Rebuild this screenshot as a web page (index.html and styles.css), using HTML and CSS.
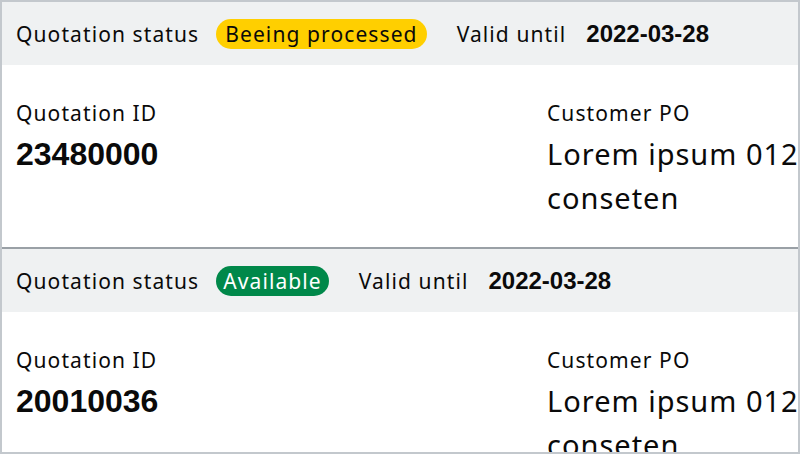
FILE: index.html
```html
<!DOCTYPE html>
<html>
<head>
<meta charset="utf-8">
<link rel="stylesheet" href="styles.css">
</head>
<body>
<div class="frame">
  <section class="card">
    <div class="card-head">
      <span class="label">Quotation status</span>
      <span class="badge badge-yellow">Beeing processed</span>
      <span class="label valid">Valid until</span>
      <span class="date">2022-03-28</span>
    </div>
    <div class="card-body">
      <div class="field">
        <div class="field-label">Quotation ID</div>
        <div class="field-id">23480000</div>
      </div>
      <div class="field">
        <div class="field-label">Customer PO</div>
        <div class="field-text">Lorem ipsum 0123456789<br>conseten</div>
      </div>
    </div>
  </section>
  <section class="card">
    <div class="card-head">
      <span class="label">Quotation status</span>
      <span class="badge badge-green">Available</span>
      <span class="label valid">Valid until</span>
      <span class="date">2022-03-28</span>
    </div>
    <div class="card-body">
      <div class="field">
        <div class="field-label">Quotation ID</div>
        <div class="field-id">20010036</div>
      </div>
      <div class="field">
        <div class="field-label">Customer PO</div>
        <div class="field-text">Lorem ipsum 0123456789<br>conseten</div>
      </div>
    </div>
  </section>
</div>
</body>
</html>
```

FILE: styles.css
```css
html, body {
  margin: 0;
  padding: 0;
  background: #ffffff;
}
.frame {
  box-sizing: border-box;
  width: 800px;
  height: 454px;
  border: 2px solid #c3c8cd;
  overflow: hidden;
  font-family: "Noto Sans", sans-serif;
  color: #0a0a0a;
}
.card {
  border-bottom: 2px solid #9aa0a6;
}
.card-head {
  height: 63px;
  background: #eff1f2;
  display: flex;
  align-items: center;
  padding-left: 14px;
  white-space: nowrap;
}
.label {
  font-size: 21px;
  letter-spacing: 1.1px;
}
.badge {
  margin-left: 17px;
  height: 30px;
  line-height: 30px;
  padding: 0 9px;
  border-radius: 15px;
  font-size: 21px;
  letter-spacing: 1.1px;
}
.badge-yellow {
  background: #ffcf00;
  color: #0a0a0a;
}
.badge-green {
  padding: 0 7px;
  background: #00884a;
  color: #fff;
}
.valid {
  margin-left: 30px;
}
.date {
  margin-left: 20px;
  font-family: "Liberation Sans", Arial, sans-serif;
  font-weight: bold;
  font-size: 24px;
}
.card-body {
  height: 182px;
  box-sizing: border-box;
  padding: 34px 0 0 14px;
  display: grid;
  grid-template-columns: 531px 600px;
}
.field-label {
  font-size: 21px;
  line-height: 28px;
  letter-spacing: 1.1px;
}
.field-id {
  margin-top: 10px;
  font-family: "Liberation Sans", Arial, sans-serif;
  font-weight: bold;
  font-size: 32px;
  line-height: 34px;
}
.field-text {
  margin-top: 5px;
  font-size: 29px;
  line-height: 44px;
  letter-spacing: 1px;
  white-space: nowrap;
}
```
